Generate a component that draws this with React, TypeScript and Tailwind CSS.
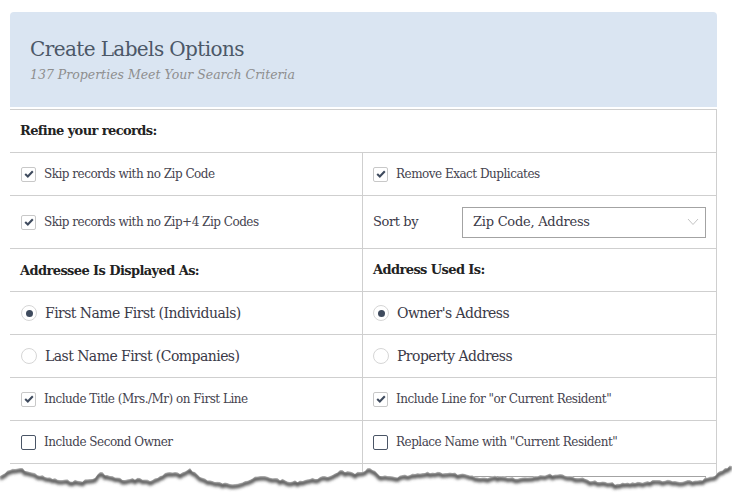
import { ReactNode } from 'react'

const font = { fontFamily: '"DejaVu Serif", serif' }

function Check({ checked }: { checked: boolean }) {
  if (!checked) {
    return <span className="inline-block w-[15px] h-[15px] rounded-[2px] border-[1.5px] border-[#4a5566] bg-white shrink-0" />
  }
  return (
    <span className="inline-flex items-center justify-center w-[15px] h-[15px] rounded-[2px] border border-[#c8c8c8] bg-white shrink-0">
      <svg width="10" height="8" viewBox="0 0 10 8">
        <path d="M1.2 4.1 L3.8 6.5 L8.8 1.3" fill="none" stroke="#3f4b5e" strokeWidth="2.1" />
      </svg>
    </span>
  )
}

function Radio({ checked }: { checked: boolean }) {
  return (
    <span className="inline-flex items-center justify-center w-[16px] h-[16px] rounded-full border border-[#d6d6d6] bg-white shrink-0">
      {checked && <span className="w-[7px] h-[7px] rounded-full bg-[#3f4b5e]" />}
    </span>
  )
}

function Row({ left, right, tall }: { left: ReactNode; right: ReactNode; tall?: boolean }) {
  return (
    <div className={`flex border-b border-[#cfcfcf] ${tall ? 'h-[53px]' : 'h-[43px]'}`}>
      <div className="w-[353px] shrink-0 border-r border-[#cfcfcf] flex items-center pl-[11px]">{left}</div>
      <div className="flex-1 flex items-center pl-[10px] pr-[10px]">{right}</div>
    </div>
  )
}

function CheckItem({ checked, label }: { checked: boolean; label: string }) {
  return (
    <div className="flex items-center gap-[8px] text-[12px] tracking-[-0.5px] text-[#45434f]">
      <Check checked={checked} />
      <span>{label}</span>
    </div>
  )
}

function RadioItem({ checked, label }: { checked: boolean; label: string }) {
  return (
    <div className="flex items-center gap-[8px] text-[14px] tracking-[-0.55px] text-[#3b3a48]">
      <Radio checked={checked} />
      <span>{label}</span>
    </div>
  )
}

function Heading({ children }: { children: ReactNode }) {
  return <span className="text-[13px] font-bold tracking-[-0.6px] text-[#222]">{children}</span>
}

// torn edge: key points, then small jitter in between
const keys: [number, number][] = [
  [0, 476], [10, 470], [20, 468], [30, 472], [45, 477], [60, 480], [80, 481], [95, 478], [100, 472],
  [110, 476], [125, 480], [140, 478], [150, 481], [160, 476], [170, 472], [180, 474], [190, 468],
  [200, 477], [215, 482], [230, 484], [245, 481], [260, 476], [275, 478], [290, 482], [310, 479],
  [330, 476], [340, 470], [355, 474], [370, 468], [380, 476], [395, 477], [410, 475], [425, 473],
  [440, 472], [460, 474], [480, 478], [500, 476], [520, 478], [540, 475], [560, 474], [580, 478],
  [600, 482], [620, 484], [640, 482], [660, 480], [680, 482], [700, 480], [715, 476], [725, 468], [732, 466],
]

function edgePoints() {
  const pts: string[] = []
  let seed = 7
  const rnd = () => {
    seed = (seed * 9301 + 49297) % 233280
    return seed / 233280
  }
  for (let i = 0; i < keys.length - 1; i++) {
    const [x0, y0] = keys[i]
    const [x1, y1] = keys[i + 1]
    const steps = Math.max(1, Math.round((x1 - x0) / 2.5))
    for (let s = 0; s < steps; s++) {
      const t = s / steps
      const j = s === 0 ? 0 : (rnd() - 0.5) * 2.6
      pts.push(`${(x0 + (x1 - x0) * t).toFixed(1)} ${(y0 + (y1 - y0) * t + j).toFixed(1)}`)
    }
  }
  pts.push(`${keys[keys.length - 1][0]} ${keys[keys.length - 1][1]}`)
  return pts
}

const edge = edgePoints()
const edgeLine = 'M' + edge.join(' L')
const edgeFill = 'M0 497 L' + edge.join(' L') + ' L732 497 Z'

export default function App() {
  return (
    <div className="relative w-[732px] h-[497px] bg-white overflow-hidden" style={font}>
      <div className="absolute left-[10px] top-[12px] w-[707px]">
        {/* header */}
        <div className="h-[95px] bg-[#dae5f2] rounded-t-[4px] pl-[20px] pt-[23px]">
          <h1 className="text-[20px] leading-[28px] tracking-[-0.6px] text-[#4c5868]">Create Labels Options</h1>
          <p className="text-[12.5px] italic text-[#8e8e8e] mt-[3px]">137 Properties Meet Your Search Criteria</p>
        </div>

        <div className="mt-[2px] border-t border-r border-[#cfcfcf]">
          <div className="h-[43px] border-b border-[#cfcfcf] flex items-center pl-[10px]">
            <Heading>Refine your records:</Heading>
          </div>
          <Row
            left={<CheckItem checked label="Skip records with no Zip Code" />}
            right={<CheckItem checked label="Remove Exact Duplicates" />}
          />
          <Row
            tall
            left={<CheckItem checked label="Skip records with no Zip+4 Zip Codes" />}
            right={
              <div className="flex items-center w-full">
                <span className="text-[13px] tracking-[-0.4px] text-[#3b3a48] w-[89px]">Sort by</span>
                <div className="flex-1 h-[31px] border border-[#a3a3a3] flex items-center justify-between pl-[10px] pr-[6px]">
                  <span className="text-[13px] tracking-[-0.25px] text-[#3b3a48]">Zip Code, Address</span>
                  <svg width="12" height="8" viewBox="0 0 12 8">
                    <path d="M1 1 L6 6.5 L11 1" fill="none" stroke="#c4c4c4" strokeWidth="1" />
                  </svg>
                </div>
              </div>
            }
          />
          <Row
            left={<span className="-ml-px"><Heading>Addressee Is Displayed As:</Heading></span>}
            right={<Heading>Address Used Is:</Heading>}
          />
          <Row
            left={<RadioItem checked label="First Name First (Individuals)" />}
            right={<RadioItem checked label="Owner's Address" />}
          />
          <Row
            left={<RadioItem checked={false} label="Last Name First (Companies)" />}
            right={<RadioItem checked={false} label="Property Address" />}
          />
          <Row
            left={<CheckItem checked label="Include Title (Mrs./Mr) on First Line" />}
            right={<CheckItem checked label={'Include Line for "or Current Resident"'} />}
          />
          <Row
            left={<CheckItem checked={false} label="Include Second Owner" />}
            right={<CheckItem checked={false} label={'Replace Name with "Current Resident"'} />}
          />
          <div className="flex h-[43px]">
            <div className="w-[353px] shrink-0 border-r border-[#cfcfcf]" />
            <div className="flex-1 pr-[10px] pt-[12px]">
              <div className="ml-[89px] h-[31px] border border-[#a3a3a3]" />
            </div>
          </div>
        </div>
      </div>

      {/* torn paper edge */}
      <svg className="absolute left-0 top-[455px]" width="732" height="42" viewBox="0 455 732 42">
        <defs>
          <filter id="blur" x="-5%" y="-50%" width="110%" height="200%">
            <feGaussianBlur stdDeviation="1.7" />
          </filter>
          <clipPath id="below">
            <path d={edgeFill} />
          </clipPath>
        </defs>
        <path d={edgeFill} fill="#fff" />
        <g clipPath="url(#below)">
          <path
            transform="translate(0 2.5)"
            d={edgeLine}
            fill="none"
            stroke="#555"
            strokeWidth="4"
            filter="url(#blur)"
          />
        </g>
      </svg>
    </div>
  )
}
